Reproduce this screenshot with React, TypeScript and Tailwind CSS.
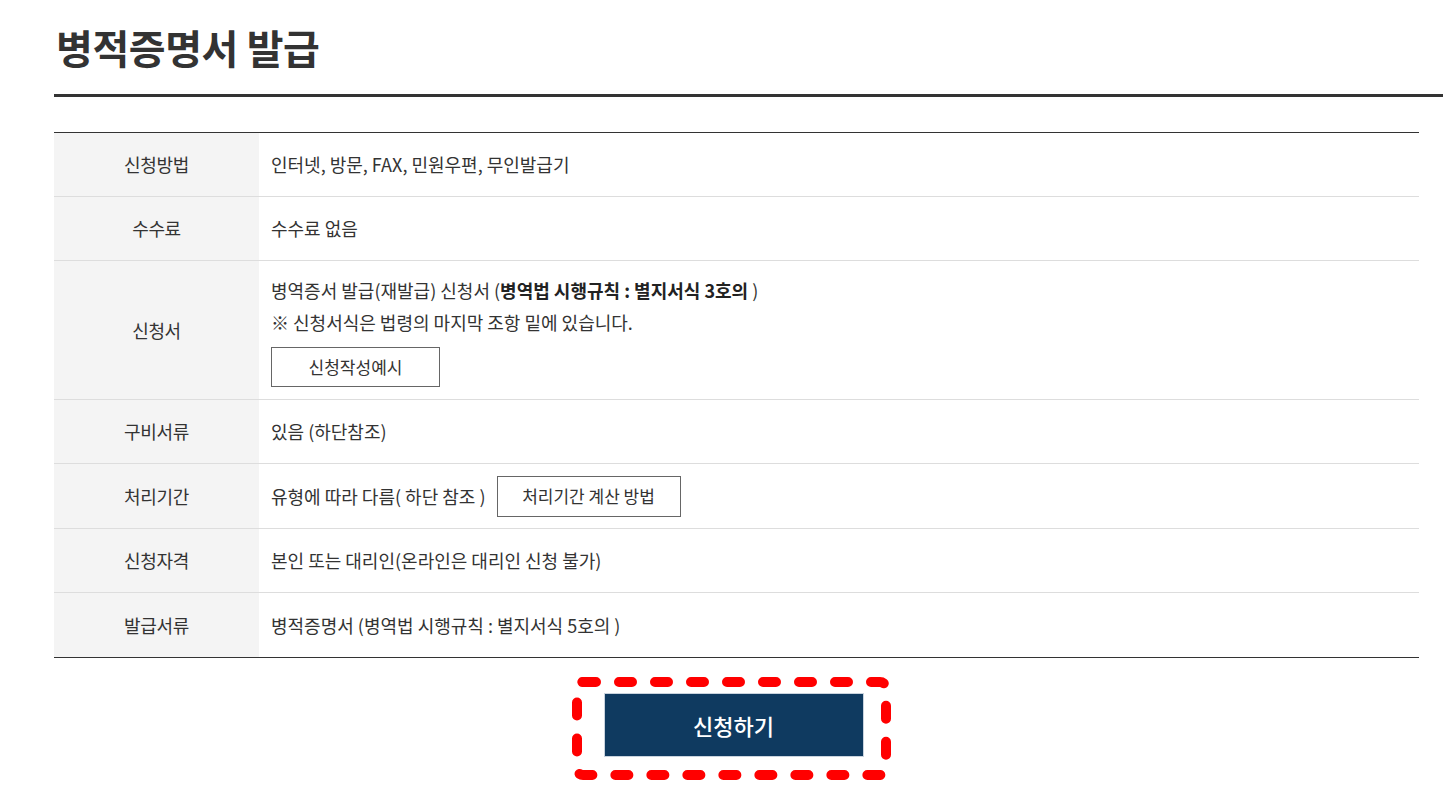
import React from 'react';

const font = '"Noto Sans CJK KR", "Noto Sans", sans-serif';

const rows: { label: string; content: React.ReactNode; h: string }[] = [
  { label: '신청방법', h: 'h-[63px]', content: <span>인터넷, 방문, FAX, 민원우편, 무인발급기</span> },
  { label: '수수료', h: 'h-[64px]', content: <span>수수료 없음</span> },
  {
    label: '신청서',
    h: 'h-[139px]',
    content: (
      <div className="flex flex-col items-start pt-px">
        <p className="leading-8">
          병역증서 발급(재발급) 신청서 (<b className="font-bold text-[#222]">병역법 시행규칙 : 별지서식 3호의 </b>)
        </p>
        <p className="leading-8">※ 신청서식은 법령의 마지막 조항 밑에 있습니다.</p>
        <button className="mt-[9px] h-10 w-[169px] border border-[#666] bg-white text-[17px] text-[#333]">
          신청작성예시
        </button>
      </div>
    ),
  },
  { label: '구비서류', h: 'h-[64px]', content: <span>있음 (하단참조)</span> },
  {
    label: '처리기간',
    h: 'h-[65px]',
    content: (
      <div className="flex items-center gap-[11px]">
        <span>유형에 따라 다름( 하단 참조 )</span>
        <button className="h-[41px] w-[184px] border border-[#666] bg-white text-[17px] text-[#333]">
          처리기간 계산 방법
        </button>
      </div>
    ),
  },
  { label: '신청자격', h: 'h-[64px]', content: <span>본인 또는 대리인(온라인은 대리인 신청 불가)</span> },
  { label: '발급서류', h: 'h-[65px]', content: <span>병적증명서 (병역법 시행규칙 : 별지서식 5호의 )</span> },
];

const App = () => {
  return (
    <div className="min-h-screen overflow-hidden bg-white text-[#333]" style={{ fontFamily: font }}>
      <div className="pl-[54px]">
        <h1 className="pt-[19px] pl-[2px] text-[40px] font-bold leading-[56px] tracking-[-0.01em] text-[#333]">
          병적증명서 발급
        </h1>
        <div className="mt-[19px] h-[3px] bg-[#333]" />

        <div className="mt-[35px] mr-[24px] border-t border-b border-[#333]">
          {rows.map((row, idx) => (
            <div key={idx} className={`flex ${idx > 0 ? 'border-t border-[#ddd]' : ''} ${row.h}`}>
              <div className="flex w-[205px] shrink-0 items-center justify-center bg-[#f4f4f4] text-[18px] tracking-[-0.02em]">
                {row.label}
              </div>
              <div className="flex flex-1 items-center px-3 text-[18px]">{row.content}</div>
            </div>
          ))}
        </div>

        <div className="mr-[30px] flex justify-center pt-[35px]">
          <div className="relative">
            <button className="h-16 w-[260px] border border-[#c9d3de] bg-[#0f3a60] text-[22px] font-medium text-white">
              신청하기
            </button>
            <svg
              className="pointer-events-none absolute left-[-32px] top-[-16px]"
              width="322"
              height="106"
              viewBox="0 0 322 106"
            >
              <rect
                x="5"
                y="5"
                width="309"
                height="93"
                rx="6"
                fill="none"
                stroke="#ff0000"
                strokeWidth="10"
                strokeLinecap="round"
                strokeDasharray="13 23"
              />
            </svg>
          </div>
        </div>

        <h2 className="mt-[43px] pl-[21px] text-[22px] font-bold tracking-[-0.04em] text-[#222]">처리절차 안내</h2>
      </div>
    </div>
  );
};

export default App;
